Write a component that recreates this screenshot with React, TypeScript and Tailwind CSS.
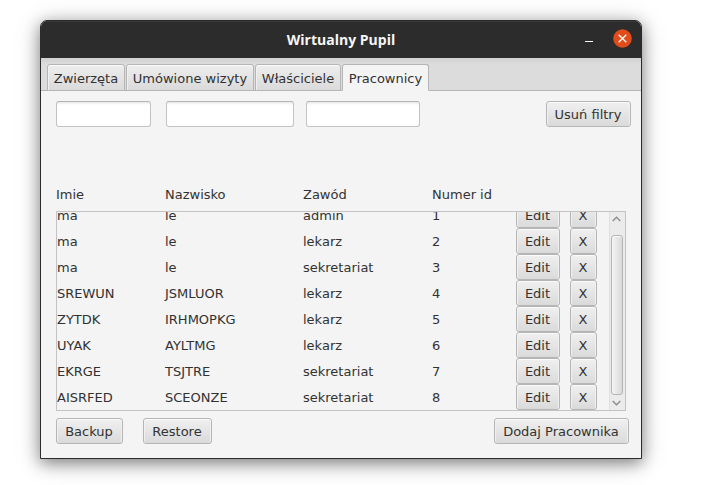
import React from 'react';

type Employee = { firstName: string; lastName: string; job: string; id: number };

const employees: Employee[] = [
  { firstName: 'ma', lastName: 'le', job: 'admin', id: 1 },
  { firstName: 'ma', lastName: 'le', job: 'lekarz', id: 2 },
  { firstName: 'ma', lastName: 'le', job: 'sekretariat', id: 3 },
  { firstName: 'SREWUN', lastName: 'JSMLUOR', job: 'lekarz', id: 4 },
  { firstName: 'ZYTDK', lastName: 'IRHMOPKG', job: 'lekarz', id: 5 },
  { firstName: 'UYAK', lastName: 'AYLTMG', job: 'lekarz', id: 6 },
  { firstName: 'EKRGE', lastName: 'TSJTRE', job: 'sekretariat', id: 7 },
  { firstName: 'AISRFED', lastName: 'SCEONZE', job: 'sekretariat', id: 8 },
];

const tabs = [
  { label: 'Zwierzęta', width: 'w-[78px]' },
  { label: 'Umówione wizyty', width: 'w-[128px]' },
  { label: 'Właściciele', width: 'w-[86px]' },
  { label: 'Pracownicy', width: 'w-[87px]' },
];

function Button({ children, className }: { children: React.ReactNode; className: string }) {
  return (
    <button
      className={`flex h-[26px] shrink-0 items-center justify-center whitespace-nowrap rounded-[3px] border border-[#b5b5b5] bg-linear-to-b from-[#f0f0f0] to-[#dadada] pr-px pt-[2px] shadow-[inset_0_1px_0_#fafafa,inset_1px_0_0_#f0f0f0,inset_-1px_0_0_#f0f0f0] ${className}`}
    >
      {children}
    </button>
  );
}

function Field({ className }: { className: string }) {
  return (
    <input
      className={`h-[26px] shrink-0 rounded-[3px] border border-[#c3c3c3] border-t-[#b5b5b5] bg-white shadow-[inset_0_3px_3px_-2px_#e0e0e0] outline-none ${className}`}
    />
  );
}

function Row({ employee }: { employee: Employee }) {
  return (
    <div className="flex h-[26px] shrink-0 items-center">
      <span className="w-[108px] pt-[2px]">{employee.firstName}</span>
      <span className="w-[138px] pt-[2px]">{employee.lastName}</span>
      <span className="w-[129px] pt-[2px]">{employee.job}</span>
      <span className="w-[84px] pt-[2px]">{employee.id}</span>
      <Button className="w-[44px]">Edit</Button>
      <Button className="ml-[10px] w-[27px]">X</Button>
    </div>
  );
}

function ScrollBar() {
  return (
    <div className="ml-auto flex w-[16px] shrink-0 flex-col items-center border-l border-[#e0e0e0] bg-[#ebebeb] pr-[2px]">
      <svg className="mt-[4px] h-[6px] w-[9px] shrink-0" viewBox="0 0 9 6" fill="none" stroke="#8a8a8a" strokeWidth="1.3">
        <path d="M.7 5 4.5 1.2 8.3 5" />
      </svg>
      <div className="mt-[13px] h-[160px] w-[12px] shrink-0 rounded-[3px] border border-[#b5b5b5] bg-linear-to-r from-[#f4f4f4] to-[#dadada] shadow-[inset_0_1px_0_#fafafa]" />
      <svg className="mt-[5px] h-[6px] w-[9px] shrink-0" viewBox="0 0 9 6" fill="none" stroke="#8a8a8a" strokeWidth="1.3">
        <path d="M.7 1 4.5 4.8 8.3 1" />
      </svg>
    </div>
  );
}

export default function App() {
  return (
    <div className="h-[485px] w-[704px] overflow-hidden bg-white pl-[40px] pt-[20px] font-['DejaVu_Sans',sans-serif] text-[13px] leading-[16px] text-[#323232]">
      <div className="flex h-[439px] w-[602px] flex-col overflow-hidden rounded-t-[7px] border border-[#2b2b2b] bg-[#f4f4f4] shadow-[0_4px_16px_rgba(0,0,0,0.45),0_3px_30px_rgba(0,0,0,0.14)]">
        <header className="flex h-[37px] shrink-0 items-center bg-[#2c2c2c] shadow-[inset_0_1px_0_#383838]">
          <div className="w-[90px]" />
          <h1 className="flex-1 text-center font-['Open_Sans',sans-serif] text-[14px] font-bold text-[#f6f6f6]">
            Wirtualny Pupil
          </h1>
          <div className="flex w-[90px] items-center justify-end pb-[2px] pr-[9px]">
            <div className="mr-[20px] mt-[5px] h-px w-[8px] bg-white" />
            <svg className="h-[19px] w-[19px]" viewBox="0 0 19 19">
              <circle cx="9.5" cy="9.5" r="9.3" fill="#e04d1b" />
              <path d="m5.7 5.7 7.6 7.6m0-7.6-7.6 7.6" stroke="white" strokeWidth="1.3" />
            </svg>
          </div>
        </header>

        <nav className="flex h-[33px] shrink-0 items-end gap-px bg-[#dcdcdc] bg-linear-to-b from-[#d0d0d0] to-[#dcdcdc] to-20% pl-[6px] shadow-[inset_0_-1px_0_#b5b5b5]">
          {tabs.map((tab) => {
            const active = tab.label === 'Pracownicy';
            return (
              <div
                key={tab.label}
                className={`flex h-[27px] items-center justify-center whitespace-nowrap rounded-t-[3px] border border-[#b5b5b5] pt-[3px] ${tab.width} ${
                  active ? 'border-b-[#f4f4f4] bg-[#f4f4f4]' : 'bg-linear-to-b from-[#eeeeee] to-[#dadada] shadow-[inset_0_1px_0_#fafafa,inset_1px_0_0_#f0f0f0]'
                }`}
              >
                {tab.label}
              </div>
            );
          })}
        </nav>

        <main className="flex flex-1 flex-col pl-[15px] pt-[10px]">
          <div className="flex h-[26px] w-[575px] shrink-0">
            <Field className="w-[95px]" />
            <Field className="ml-[15px] w-[128px]" />
            <Field className="ml-[12px] w-[114px]" />
            <Button className="ml-auto w-[85px]">Usuń filtry</Button>
          </div>

          <div className="mt-[60px] flex h-[16px] shrink-0">
            <span className="w-[109px]">Imie</span>
            <span className="w-[138px]">Nazwisko</span>
            <span className="w-[129px]">Zawód</span>
            <span>Numer id</span>
          </div>

          <div className="mt-[8px] flex h-[200px] w-[570px] shrink-0 overflow-hidden border border-[#c3c3c3]">
            <div className="-mt-[10px] flex flex-col">
              {employees.map((employee) => (
                <Row key={employee.id} employee={employee} />
              ))}
            </div>
            <ScrollBar />
          </div>

          <footer className="mt-[7px] flex w-[573px]">
            <Button className="w-[67px]">Backup</Button>
            <Button className="ml-[20px] w-[69px]">Restore</Button>
            <Button className="ml-auto w-[135px]">Dodaj Pracownika</Button>
          </footer>
        </main>
      </div>
    </div>
  );
}
